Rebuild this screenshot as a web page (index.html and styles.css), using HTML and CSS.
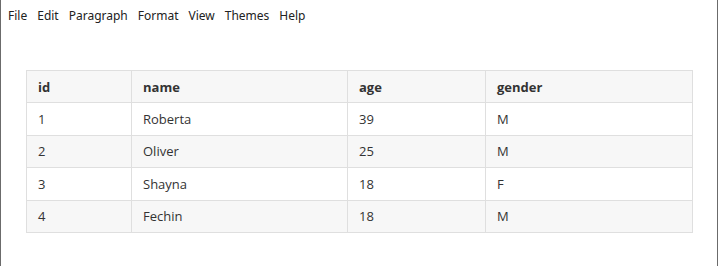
FILE: index.html
```html
<!DOCTYPE html>
<html lang="en">
<head>
    <meta charset="UTF-8">
    <title>Table</title>
    <link rel="stylesheet" href="styles.css">
</head>
<body>

<div class="window">
    <!-- Menu bar -->
    <div class="menu">
        <span>File</span>
        <span>Edit</span>
        <span>Paragraph</span>
        <span>Format</span>
        <span>View</span>
        <span>Themes</span>
        <span>Help</span>
    </div>

    <div class="content">
        <table class="data">
            <colgroup>
                <col class="c-id">
                <col class="c-name">
                <col class="c-age">
                <col class="c-gender">
            </colgroup>
            <thead>
                <tr><th>id</th><th>name</th><th>age</th><th>gender</th></tr>
            </thead>
            <tbody>
                <tr><td>1</td><td>Roberta</td><td>39</td><td>M</td></tr>
                <tr><td>2</td><td>Oliver</td><td>25</td><td>M</td></tr>
                <tr><td>3</td><td>Shayna</td><td>18</td><td>F</td></tr>
                <tr><td>4</td><td>Fechin</td><td>18</td><td>M</td></tr>
            </tbody>
        </table>
    </div>
</div>

</body>
</html>
```

FILE: styles.css
```css
body {
    margin: 0;
    background-color: #ffffff;
    font-family: "Open Sans", "Noto Sans", sans-serif;
}
.window {
    width: 716px;
    height: 266px;
    border-left: 1px solid #6b6b6b;
    border-right: 1px solid #6b6b6b;
    box-sizing: content-box;
}
.menu {
    display: flex;
    gap: 10px;
    padding: 7px 0 0 7px;
    height: 20px;
    font-family: "Noto Sans", "Open Sans", sans-serif;
    font-size: 12px;
    line-height: 18px;
    color: #222222;
}
.content {
    padding: 43px 0 0 25px;
}
.data {
    border-collapse: collapse;
    table-layout: fixed;
    width: 666px;
    font-size: 13px;
    color: #333333;
}
.c-id { width: 105px; }
.c-name { width: 216px; }
.c-age { width: 138px; }
.c-gender { width: 207px; }
.data th,
.data td {
    border: 1px solid #dfdfdf;
    padding: 5.6px 11px 5.8px 11px;
    height: 20px;
    line-height: 20px;
    text-align: left;
}
.data th {
    font-weight: bold;
    background-color: #f7f7f7;
}
.data tbody tr:nth-child(even) td {
    background-color: #f7f7f7;
}
```
